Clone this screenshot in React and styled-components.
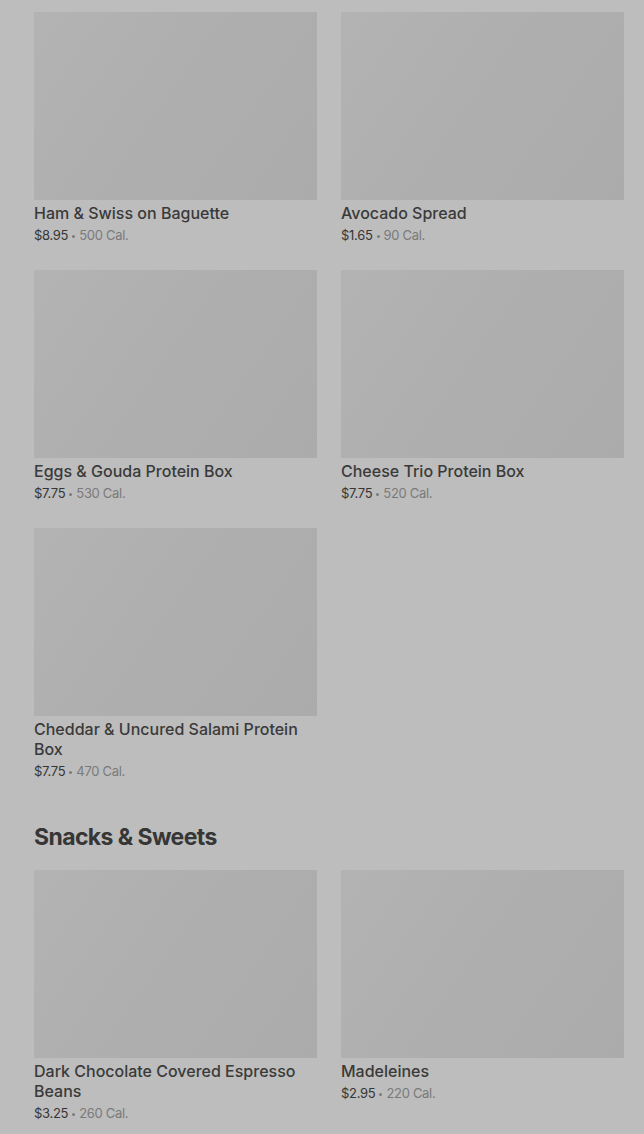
import styled, { createGlobalStyle } from "styled-components";

const GlobalStyle = createGlobalStyle`
  html, body {
    margin: 0;
    padding: 0;
    background: #bdbdbd;
  }
  body {
    font-family: Inter, "Noto Sans", Arial, sans-serif;
    color: #3a3a3a;
    -webkit-font-smoothing: antialiased;
  }
`;

const sections = [
  {
    title: null,
    items: [
      { name: "Ham & Swiss on Baguette", price: "$8.95", cal: "500 Cal." },
      { name: "Avocado Spread", price: "$1.65", cal: "90 Cal." },
      { name: "Eggs & Gouda Protein Box", price: "$7.75", cal: "530 Cal." },
      { name: "Cheese Trio Protein Box", price: "$7.75", cal: "520 Cal." },
      {
        name: "Cheddar & Uncured Salami Protein Box",
        price: "$7.75",
        cal: "470 Cal.",
      },
    ],
  },
  {
    title: "Snacks & Sweets",
    items: [
      {
        name: "Dark Chocolate Covered Espresso Beans",
        price: "$3.25",
        cal: "260 Cal.",
      },
      { name: "Madeleines", price: "$2.95", cal: "220 Cal." },
    ],
  },
];

const Page = styled.main`
  padding: 12px 20px 0 34px;
  overflow: hidden;
  height: 1134px;
  box-sizing: border-box;
`;

const Section = styled.section`
  & + & {
    margin-top: 40px;
  }
`;

const SectionTitle = styled.h2`
  margin: 0 0 17px;
  font-size: 23px;
  line-height: 32px;
  font-weight: 700;
  letter-spacing: -0.6px;
  color: #363636;
`;

const Grid = styled.div`
  display: grid;
  grid-template-columns: repeat(2, 283px);
  column-gap: 24px;
  row-gap: 25px;
`;

const Card = styled.div`
  display: flex;
  flex-direction: column;
`;

const Thumb = styled.div`
  height: 188px;
  background: linear-gradient(125deg, #b3b3b3 0%, #aeaeae 55%, #ababab 100%);
`;

const Name = styled.div`
  margin-top: 3px;
  font-size: 16px;
  line-height: 20px;
  font-weight: 500;
  color: #3a3a3a;
`;

const Meta = styled.div`
  margin-top: 3px;
  height: 19px;
  font-size: 13px;
  line-height: 19px;
  color: #7a7a7a;
  letter-spacing: -0.3px;
`;

const Price = styled.span`
  color: #363636;
`;

const Dot = styled.span`
  display: inline-block;
  width: 3px;
  height: 3px;
  margin: 0 4px;
  border-radius: 50%;
  background: #7a7a7a;
  vertical-align: middle;
`;

export default function App() {
  return (
    <>
      <GlobalStyle />
      <Page>
        {sections.map((s, i) => (
          <Section key={i}>
            {s.title && <SectionTitle>{s.title}</SectionTitle>}
            <Grid>
              {s.items.map((it) => (
                <Card key={it.name}>
                  <Thumb />
                  <Name>{it.name}</Name>
                  <Meta>
                    <Price>{it.price}</Price>
                    <Dot />
                    {it.cal}
                  </Meta>
                </Card>
              ))}
            </Grid>
          </Section>
        ))}
      </Page>
    </>
  );
}
